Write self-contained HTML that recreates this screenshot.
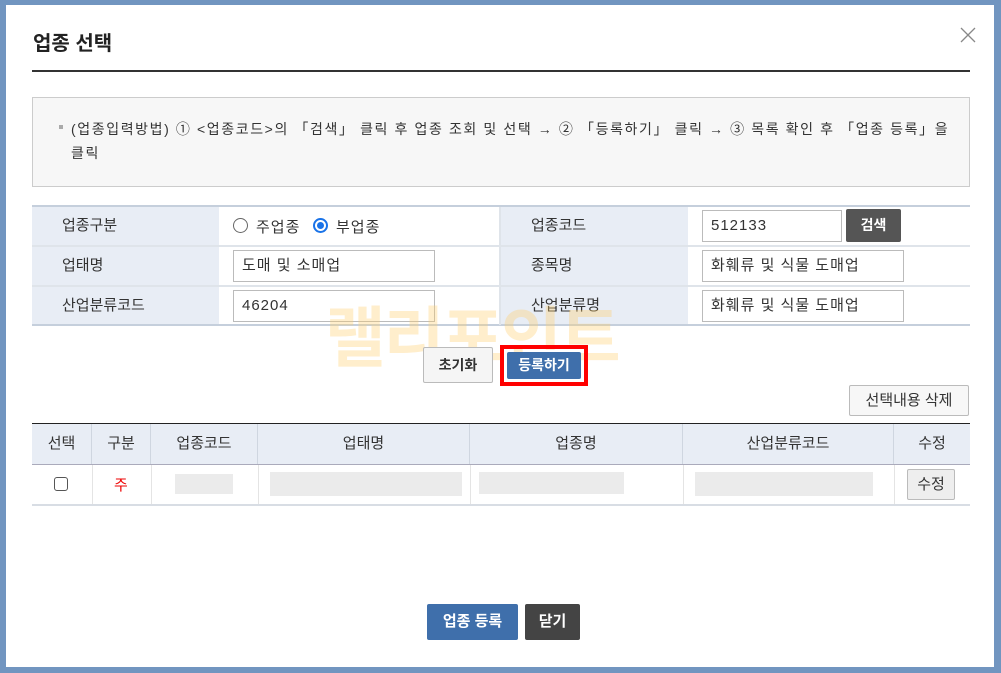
<!DOCTYPE html><html><head><meta charset="utf-8"><style>
*{box-sizing:border-box;margin:0;padding:0}
body{width:1001px;height:673px;background:#7195c0;position:relative;overflow:hidden;font-family:"Liberation Sans","Noto Sans CJK KR",sans-serif;color:#333}
.dlg{position:absolute;left:6px;top:5px;width:988px;height:662px;background:#fff}
.a{position:absolute}
.hatch{background:repeating-linear-gradient(135deg,#f3f3f3 0 2px,#e6e6e6 2px 3px)}
.inp{position:absolute;height:32px;border:1px solid #bbb;font-size:15px;padding:0 0 0 8px;line-height:30px;color:#333;background:#fff;letter-spacing:1px}
.lbl{position:absolute;background:#e8edf5;font-size:15px;line-height:40px;padding-left:30px;color:#333}
.btn{position:absolute;font-size:14px;font-weight:bold;text-align:center;border-radius:2px}
.th{position:absolute;top:424px;height:40px;line-height:40px;text-align:center;font-size:15px;background:#e8edf5;border-right:1px solid #cfd6e0}
.blur{position:absolute;background:#ebebeb;height:24px}
</style></head><body>
<div class="dlg"></div>
<div class="a" style="left:33px;top:27px;font-size:20px;font-weight:bold;color:#222">업종 선택</div>
<svg class="a" style="left:960px;top:27px" width="16" height="16" viewBox="0 0 16 16"><path d="M1 1L15 15M15 1L1 15" stroke="#888" stroke-width="1.3"/></svg>
<div class="a" style="left:32px;top:70px;width:938px;height:2px;background:#333"></div>
<div class="a" style="left:32px;top:97px;width:938px;height:90px;background:#f7f7f7;border:1px solid #ccc"></div>
<div class="a" style="left:59px;top:125px;width:4px;height:4px;background:#aaa"></div>
<div class="a" style="left:71px;top:117px;width:885px;font-size:14px;line-height:24px;color:#333;letter-spacing:1.6px">(업종입력방법) ① &lt;업종코드&gt;의 「검색」 클릭 후 업종 조회 및 선택 → ② 「등록하기」 클릭 → ③ 목록 확인 후 「업종 등록」을 클릭</div>
<!-- form -->
<div class="a" style="left:32px;top:205px;width:938px;height:2px;background:#c5cfdc"></div>
<div class="lbl" style="left:32px;top:207px;width:187px;height:38px;line-height:38px">업종구분</div>
<div class="lbl" style="left:32px;top:247px;width:187px;height:38px;line-height:38px">업태명</div>
<div class="lbl" style="left:32px;top:287px;width:187px;height:38px;line-height:38px">산업분류코드</div>
<div class="lbl" style="left:501px;top:207px;width:187px;height:38px;line-height:38px">업종코드</div>
<div class="lbl" style="left:501px;top:247px;width:187px;height:38px;line-height:38px">종목명</div>
<div class="lbl" style="left:501px;top:287px;width:187px;height:38px;line-height:38px">산업분류명</div>
<div class="a" style="left:32px;top:245px;width:938px;height:2px;background:#dfe4ea"></div>
<div class="a" style="left:32px;top:285px;width:938px;height:2px;background:#dfe4ea"></div>
<div class="a" style="left:32px;top:324px;width:938px;height:2px;background:#c5cfdc"></div>
<div class="a" style="left:499px;top:207px;width:2px;height:118px;background:#dfe4ea"></div>
<div class="a" style="left:233px;top:218px;width:15px;height:15px;border:1px solid #666;border-radius:50%"></div>
<div class="a" style="left:256px;top:216px;font-size:15px;letter-spacing:1px">주업종</div>
<div class="a" style="left:313px;top:218px;width:15px;height:15px;border:2px solid #1a73e8;border-radius:50%;padding:2px"><div style="width:7px;height:7px;background:#1a73e8;border-radius:50%"></div></div>
<div class="a" style="left:336px;top:216px;font-size:15px;letter-spacing:1px">부업종</div>
<div class="inp" style="left:233px;top:250px;width:202px">도매 및 소매업</div>
<div class="inp hatch" style="left:233px;top:290px;width:202px">46204</div>
<div class="inp hatch" style="left:702px;top:210px;width:140px">512133</div>
<div class="btn" style="left:846px;top:209px;width:55px;height:33px;line-height:33px;background:#555;color:#fff">검색</div>
<div class="inp" style="left:702px;top:250px;width:202px">화훼류 및 식물 도매업</div>
<div class="inp hatch" style="left:702px;top:290px;width:202px">화훼류 및 식물 도매업</div>
<div class="a" style="left:325px;top:285px;font-size:66px;font-weight:bold;color:rgba(255,205,110,0.35);letter-spacing:-2px">랠리포인트</div>
<div class="btn" style="left:423px;top:347px;width:70px;height:36px;line-height:34px;background:#f5f5f5;border:1px solid #bbb;color:#333">초기화</div>
<div class="a" style="left:500px;top:345px;width:88px;height:41px;border:4px solid #f00"></div>
<div class="btn" style="left:507px;top:352px;width:74px;height:27px;line-height:27px;background:#3f6fab;color:#fff">등록하기</div>
<div class="btn" style="left:849px;top:385px;width:120px;height:31px;line-height:29px;background:#f7f7f7;border:1px solid #bbb;color:#333;font-weight:normal;font-size:15px">선택내용 삭제</div>
<!-- grid -->
<div class="a" style="left:32px;top:423px;width:938px;height:1px;background:#222"></div>
<div class="th" style="left:32px;width:60px">선택</div>
<div class="th" style="left:92px;width:59px">구분</div>
<div class="th" style="left:151px;width:107px">업종코드</div>
<div class="th" style="left:258px;width:212px">업태명</div>
<div class="th" style="left:470px;width:213px">업종명</div>
<div class="th" style="left:683px;width:211px">산업분류코드</div>
<div class="th" style="left:894px;width:76px;border-right:0">수정</div>
<div class="a" style="left:32px;top:464px;width:938px;height:1px;background:#aab"></div>
<div class="a" style="left:32px;top:504px;width:938px;height:2px;background:#d8dde4"></div>
<div class="a" style="left:92px;top:465px;width:1px;height:39px;background:#e4e4e4"></div>
<div class="a" style="left:151px;top:465px;width:1px;height:39px;background:#e4e4e4"></div>
<div class="a" style="left:258px;top:465px;width:1px;height:39px;background:#e4e4e4"></div>
<div class="a" style="left:470px;top:465px;width:1px;height:39px;background:#e4e4e4"></div>
<div class="a" style="left:683px;top:465px;width:1px;height:39px;background:#e4e4e4"></div>
<div class="a" style="left:894px;top:465px;width:1px;height:39px;background:#e4e4e4"></div>
<div class="a" style="left:54px;top:477px;width:14px;height:14px;border:1px solid #555;border-radius:3px"></div>
<div class="a" style="left:114px;top:474px;font-size:15px;color:#e00">주</div>
<div class="blur" style="left:175px;top:474px;width:58px;height:20px"></div>
<div class="blur" style="left:270px;top:472px;width:192px"></div>
<div class="blur" style="left:479px;top:472px;width:145px;height:22px"></div>
<div class="blur" style="left:695px;top:472px;width:178px"></div>
<div class="btn" style="left:907px;top:469px;width:48px;height:31px;line-height:29px;background:#eee;border:1px solid #bbb;color:#333;font-weight:normal;font-size:15px">수정</div>
<div class="btn" style="left:427px;top:604px;width:91px;height:36px;line-height:36px;background:#3f6fab;color:#fff;font-size:15px">업종 등록</div>
<div class="btn" style="left:525px;top:604px;width:55px;height:36px;line-height:36px;background:#444;color:#fff;font-size:15px">닫기</div>
</body></html>
